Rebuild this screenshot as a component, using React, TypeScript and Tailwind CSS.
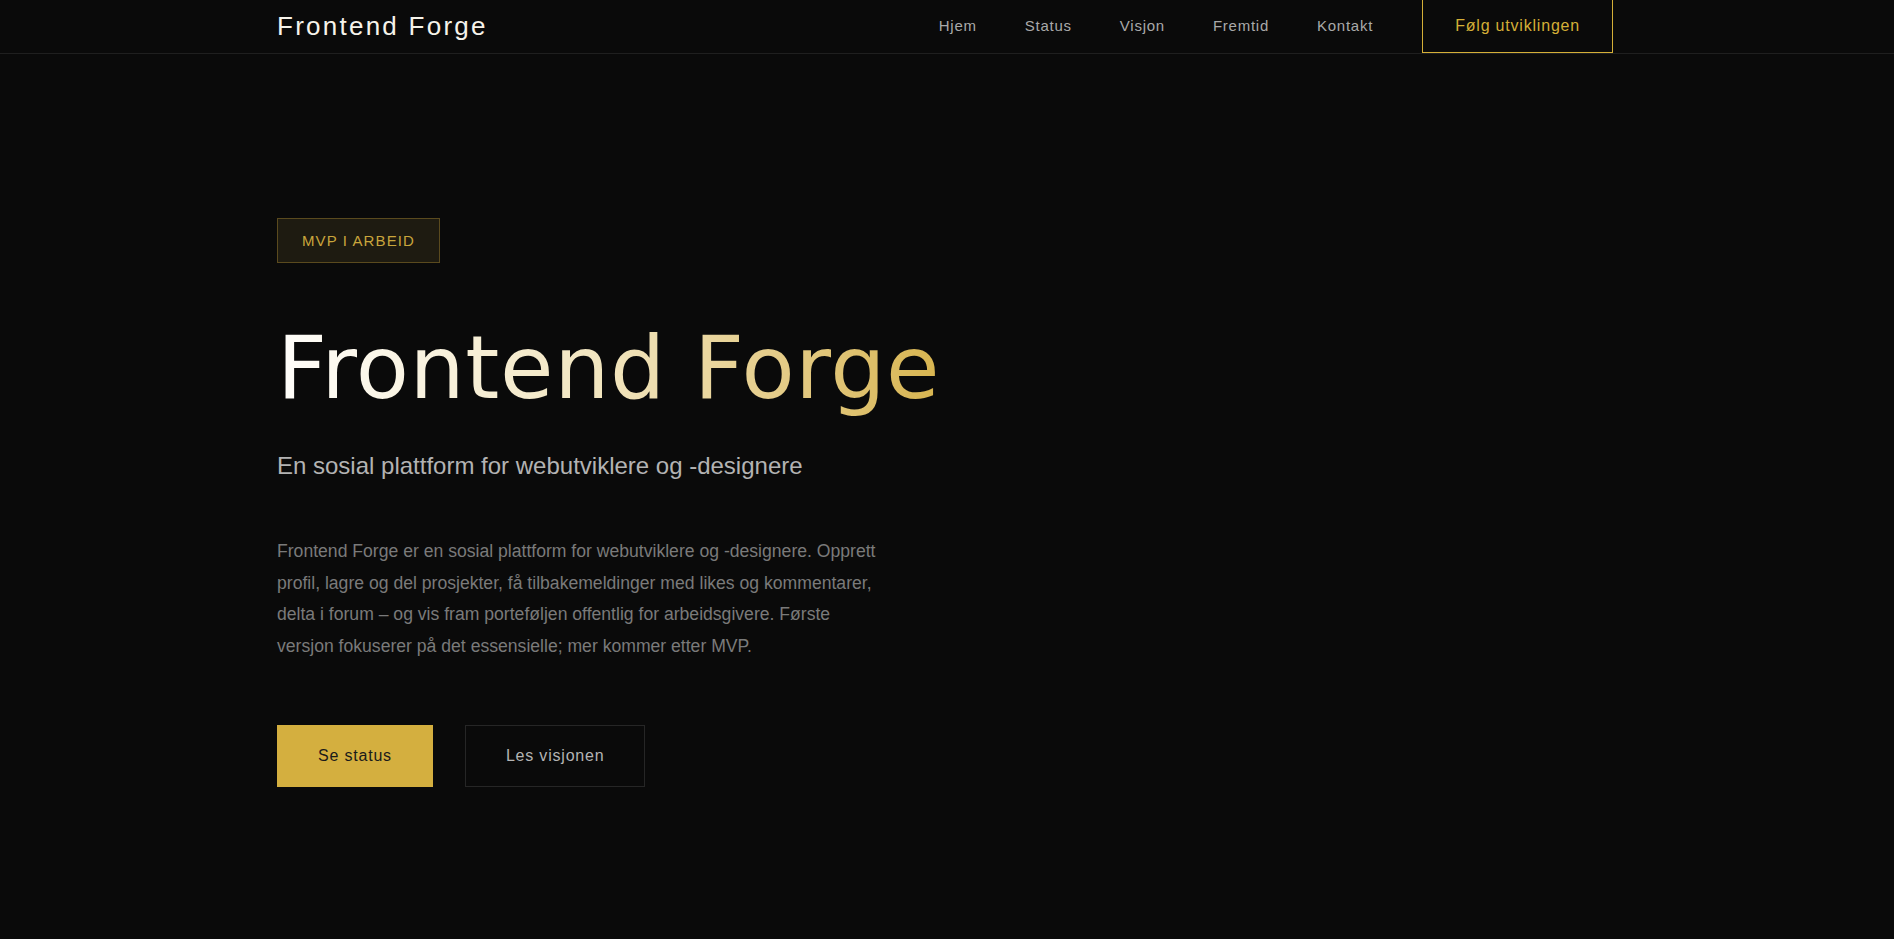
import { ReactNode } from 'react';

const NAV_LINKS = ['Hjem', 'Status', 'Visjon', 'Fremtid', 'Kontakt'];

function Header() {
  return (
    <header className="h-[54px] border-b border-[#1f1f1f]">
      <div className="mx-auto flex h-[53px] max-w-[1340px] items-center justify-between pr-[4px]">
        <a className="text-[26px] tracking-[2.25px] text-[#f6f3ea]">Frontend Forge</a>

        <nav className="flex h-full items-center">
          <ul className="flex items-center gap-[48px]">
            {NAV_LINKS.map((link) => (
              <li key={link} className="text-[15px] tracking-[0.05em] text-[#a9a9a9]">
                {link}
              </li>
            ))}
          </ul>
          {/* Knappen henger fra toppen av headeren */}
          <button className="ml-[49px] flex h-[53px] items-center border-x border-b border-[#d4af37] px-8 text-[16px] tracking-[0.05em] text-[#d4af37]">
            Følg utviklingen
          </button>
        </nav>
      </div>
    </header>
  );
}

function Button({ children, primary = false }: { children: ReactNode; primary?: boolean }) {
  return (
    <button
      className={
        primary
          ? 'border border-[#d4af3f] bg-[#d4af3f] px-10 py-5 text-[16px] leading-[20px] tracking-[0.8px] text-[#1a1a1a]'
          : 'border border-[#262626] bg-transparent px-10 py-5 text-[16px] leading-[20px] tracking-[0.8px] text-[#b4b4b4]'
      }
    >
      {children}
    </button>
  );
}

function Hero() {
  return (
    <section className="mx-auto max-w-[1340px] pt-[164px]">
      {/* Badge */}
      <span className="inline-block border border-[#5a4a1e] bg-[#1e1b11] px-6 py-3 text-[15px] leading-[19px] tracking-[1.1px] text-[#c9a53c]">
        MVP I ARBEID
      </span>

      {/* Tittel */}
      <h1 className="mt-[53px] w-fit bg-linear-to-r from-[#fffefb] via-[#f1e4bd] to-[#d8b54f] bg-clip-text font-['DejaVu_Sans',sans-serif] text-[87px] leading-[1.2] tracking-[0.6px] text-transparent">
        Frontend Forge
      </h1>

      <p className="mt-[29px] text-[24px] leading-[1.4] text-[#b3b3b3]">
        En sosial plattform for webutviklere og -designere
      </p>

      <p className="mt-[53px] max-w-[604px] text-[17.6px] leading-[1.8] text-[#7a7a7a]">
        Frontend Forge er en sosial plattform for webutviklere og -designere. Opprett profil, lagre og del
        prosjekter, få tilbakemeldinger med likes og kommentarer, delta i forum – og vis fram porteføljen
        offentlig for arbeidsgivere. Første versjon fokuserer på det essensielle; mer kommer etter MVP.
      </p>

      {/* Handlinger */}
      <div className="mt-[62px] flex gap-8">
        <Button primary>Se status</Button>
        <Button>Les visjonen</Button>
      </div>
    </section>
  );
}

export default function App() {
  return (
    <div className="min-h-[939px] bg-[#0a0a0a] font-['Liberation_Sans',Arial,sans-serif]">
      <Header />
      <Hero />
    </div>
  );
}
